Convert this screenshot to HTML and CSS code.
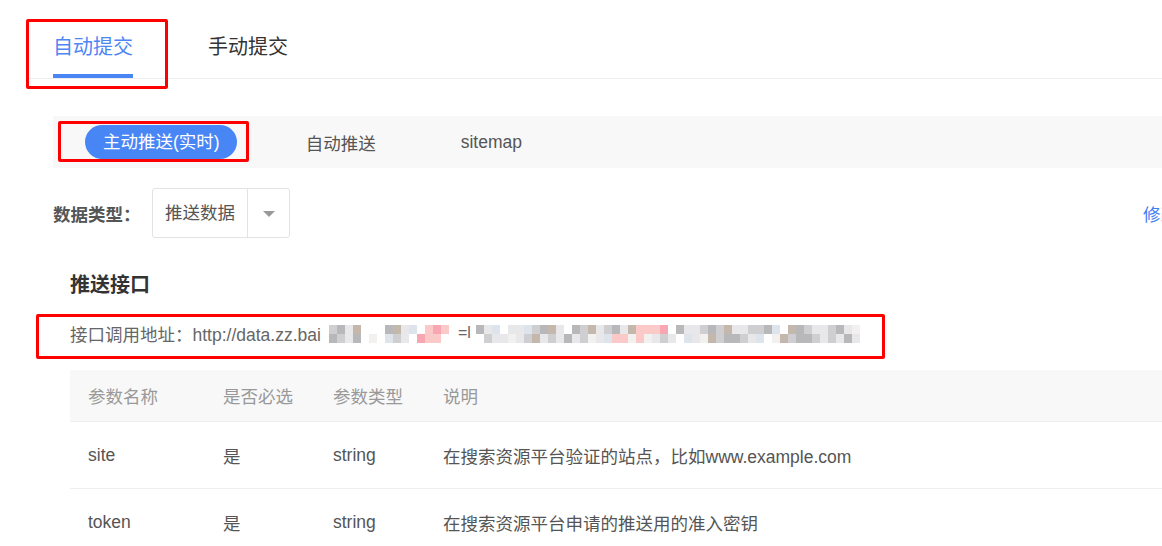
FILE: index.html
```html
<!DOCTYPE html>
<html lang="zh-CN">
<head>
<meta charset="utf-8">
<title>链接提交</title>
<link rel="stylesheet" href="styles.css">
</head>
<body>
<div class="page">
  <nav class="tabs">
    <a class="tab active">自动提交</a>
    <a class="tab">手动提交</a>
  </nav>

  <div class="subtabs">
    <span class="pill">主动推送(实时)</span>
    <span class="sub">自动推送</span>
    <span class="sub sub-last">sitemap</span>
  </div>

  <div class="filter">
    <span class="label">数据类型：</span>
    <div class="select">
      <span class="select-val">推送数据</span>
      <span class="select-arrow"></span>
    </div>
    <a class="edit">修改</a>
  </div>

  <section class="api">
    <h3 class="api-title">推送接口</h3>
    <div class="addr">
      <span class="addr-text">接口调用地址：http://data.zz.bai</span>
      <div class="mosaic m1">
        <span class="b"></span><span class="c"></span><span class="a"></span><span class="d"></span><span class="w"></span><span class="w"></span><span class="w"></span><span class="c"></span><span class="d"></span><span class="a"></span><span class="f"></span><span class="w"></span><span class="p"></span><span class="q"></span><span class="p"></span>
        <span class="c"></span><span class="b"></span><span class="a"></span><span class="c"></span><span class="w"></span><span class="e"></span><span class="w"></span><span class="f"></span><span class="b"></span><span class="a"></span><span class="w"></span><span class="q"></span><span class="p"></span><span class="p"></span><span class="w"></span>
      </div>
      <span class="eq">=l</span>
      <div class="mosaic m2">
        <span class="c"></span><span class="a"></span><span class="f"></span><span class="w"></span><span class="a"></span><span class="a"></span><span class="f"></span><span class="b"></span><span class="c"></span><span class="d"></span><span class="a"></span><span class="w"></span><span class="c"></span><span class="b"></span><span class="d"></span><span class="a"></span><span class="b"></span><span class="c"></span><span class="a"></span><span class="d"></span><span class="p"></span><span class="p"></span><span class="p"></span><span class="q"></span><span class="w"></span><span class="c"></span><span class="a"></span><span class="a"></span><span class="b"></span><span class="c"></span><span class="b"></span><span class="d"></span><span class="a"></span><span class="a"></span><span class="b"></span><span class="b"></span><span class="c"></span><span class="f"></span><span class="w"></span><span class="d"></span><span class="c"></span><span class="b"></span><span class="a"></span><span class="a"></span><span class="b"></span><span class="c"></span><span class="a"></span><span class="e"></span><span class="w"></span>
        <span class="w"></span><span class="b"></span><span class="a"></span><span class="a"></span><span class="e"></span><span class="a"></span><span class="b"></span><span class="d"></span><span class="a"></span><span class="b"></span><span class="a"></span><span class="c"></span><span class="a"></span><span class="b"></span><span class="e"></span><span class="a"></span><span class="f"></span><span class="p"></span><span class="p"></span><span class="e"></span><span class="p"></span><span class="e"></span><span class="a"></span><span class="b"></span><span class="a"></span><span class="w"></span><span class="f"></span><span class="a"></span><span class="e"></span><span class="d"></span><span class="b"></span><span class="c"></span><span class="c"></span><span class="b"></span><span class="a"></span><span class="f"></span><span class="w"></span><span class="e"></span><span class="d"></span><span class="b"></span><span class="c"></span><span class="c"></span><span class="b"></span><span class="a"></span><span class="b"></span><span class="a"></span><span class="c"></span><span class="a"></span><span class="w"></span>
      </div>
    </div>

    <table class="params">
      <colgroup>
        <col class="c-name"><col class="c-req"><col class="c-type"><col>
      </colgroup>
      <thead>
        <tr><th>参数名称</th><th>是否必选</th><th>参数类型</th><th>说明</th></tr>
      </thead>
      <tbody>
        <tr><td>site</td><td>是</td><td>string</td><td>在搜索资源平台验证的站点，比如www.example.com</td></tr>
        <tr><td>token</td><td>是</td><td>string</td><td>在搜索资源平台申请的推送用的准入密钥</td></tr>
      </tbody>
    </table>
  </section>

  <div class="mark mark-tab"></div>
  <div class="mark mark-pill"></div>
  <div class="mark mark-addr"></div>
</div>
</body>
</html>
```

FILE: styles.css
```css
html, body {
  margin: 0;
  padding: 0;
  background: #ffffff;
  overflow: hidden;
}

body {
  font-family: "Liberation Sans", "Noto Sans CJK SC", sans-serif;
  color: #555555;
}

.page {
  position: relative;
  width: 1300px;
  height: 546px;
}

/* top tabs */
.tabs {
  display: flex;
  margin-left: 26px;
  padding-left: 27px;
  border-bottom: 1px solid #eeeeee;
}

.tab {
  display: block;
  font-size: 20px;
  line-height: 28px;
  padding-top: 33px;
  padding-bottom: 13px;
  border-bottom: 4px solid transparent;
  color: #333333;
}

.tab + .tab {
  margin-left: 75px;
}

.tab.active {
  color: #4e86f4;
  border-bottom-color: #4a85f5;
}

/* sub tabs */
.subtabs {
  display: flex;
  align-items: center;
  margin: 37px 0 0 53px;
  height: 52px;
  padding-left: 32px;
  background: #f8f8f8;
}

.pill {
  display: block;
  height: 34px;
  line-height: 34px;
  padding: 0 17px 0 18px;
  border-radius: 17px;
  background: #4886f6;
  color: #ffffff;
  font-size: 17.5px;
}

.sub {
  font-size: 17.5px;
  color: #555555;
  margin-left: 69px;
}

.sub-last {
  margin-left: 85px;
}

/* filter row */
.filter {
  display: flex;
  align-items: center;
  margin-top: 20px;
  padding-left: 53px;
  height: 50px;
}

.label {
  font-size: 17.5px;
  font-weight: bold;
  color: #555555;
  width: 99px;
}

.select {
  display: flex;
  box-sizing: border-box;
  width: 138px;
  height: 50px;
  border: 1px solid #e3e3e3;
  border-radius: 3px;
}

.select-val {
  box-sizing: border-box;
  width: 95px;
  padding-left: 12px;
  line-height: 48px;
  font-size: 17.5px;
  color: #555555;
  border-right: 1px solid #e3e3e3;
}

.select-arrow {
  flex: 1;
  display: flex;
  align-items: center;
  justify-content: center;
}

.select-arrow::after {
  content: "";
  width: 0;
  height: 0;
  border-left: 6px solid transparent;
  border-right: 6px solid transparent;
  border-top: 6px solid #999999;
  margin-top: 1px;
}

.edit {
  margin-left: 853px;
  font-size: 17.5px;
  color: #3d7ef5;
  white-space: nowrap;
}

/* api section */
.api {
  padding-left: 70px;
}

.api-title {
  margin: 33px 0 0;
  font-size: 20px;
  line-height: 28px;
  font-weight: bold;
  color: #333333;
}

.addr {
  display: flex;
  align-items: center;
  margin-top: 21px;
  height: 26px;
  font-size: 17.5px;
  color: #666666;
}

.addr-text {
  white-space: nowrap;
}

.mosaic {
  display: grid;
  grid-auto-rows: 9px;
  margin-top: 1px;
}

.m1 {
  grid-template-columns: repeat(15, 8px);
  margin-left: 8px;
}

.m2 {
  grid-template-columns: repeat(49, 8px);
}

.eq {
  margin: 0 5px 0 9px;
  color: #666666;
  font-size: 16px;
}

.mosaic .w { background: transparent; }
.mosaic .a { background: #e8e8ea; }
.mosaic .b { background: #cfcfd2; }
.mosaic .c { background: #b8b7ba; }
.mosaic .d { background: #c4b8ad; }
.mosaic .e { background: #f2f1f0; }
.mosaic .f { background: #dde4ec; }
.mosaic .p { background: #fcc9c9; }
.mosaic .q { background: #f8a6b2; }

/* table */
.params {
  margin-top: 24px;
  width: 1230px;
  border-collapse: collapse;
  font-size: 17.5px;
}

.c-name { width: 135px; }
.c-req { width: 110px; }
.c-type { width: 110px; }

.params th {
  height: 51px;
  padding: 0 0 0 18px;
  background: #f8f8f8;
  color: #999999;
  font-weight: normal;
  text-align: left;
  border-bottom: 1px solid #eeeeee;
}

.params td {
  height: 66px;
  padding: 0 0 0 18px;
  color: #555555;
  border-bottom: 1px solid #eeeeee;
  white-space: nowrap;
}

/* red annotation boxes */
.mark {
  position: absolute;
  box-sizing: border-box;
  border: 3px solid #ff0000;
  border-radius: 2px;
  pointer-events: none;
}

.mark-tab {
  left: 26px;
  top: 19px;
  width: 142px;
  height: 70px;
}

.mark-pill {
  left: 58px;
  top: 121px;
  width: 191px;
  height: 41px;
}

.mark-addr {
  left: 36px;
  top: 314px;
  width: 849px;
  height: 45px;
}
```
